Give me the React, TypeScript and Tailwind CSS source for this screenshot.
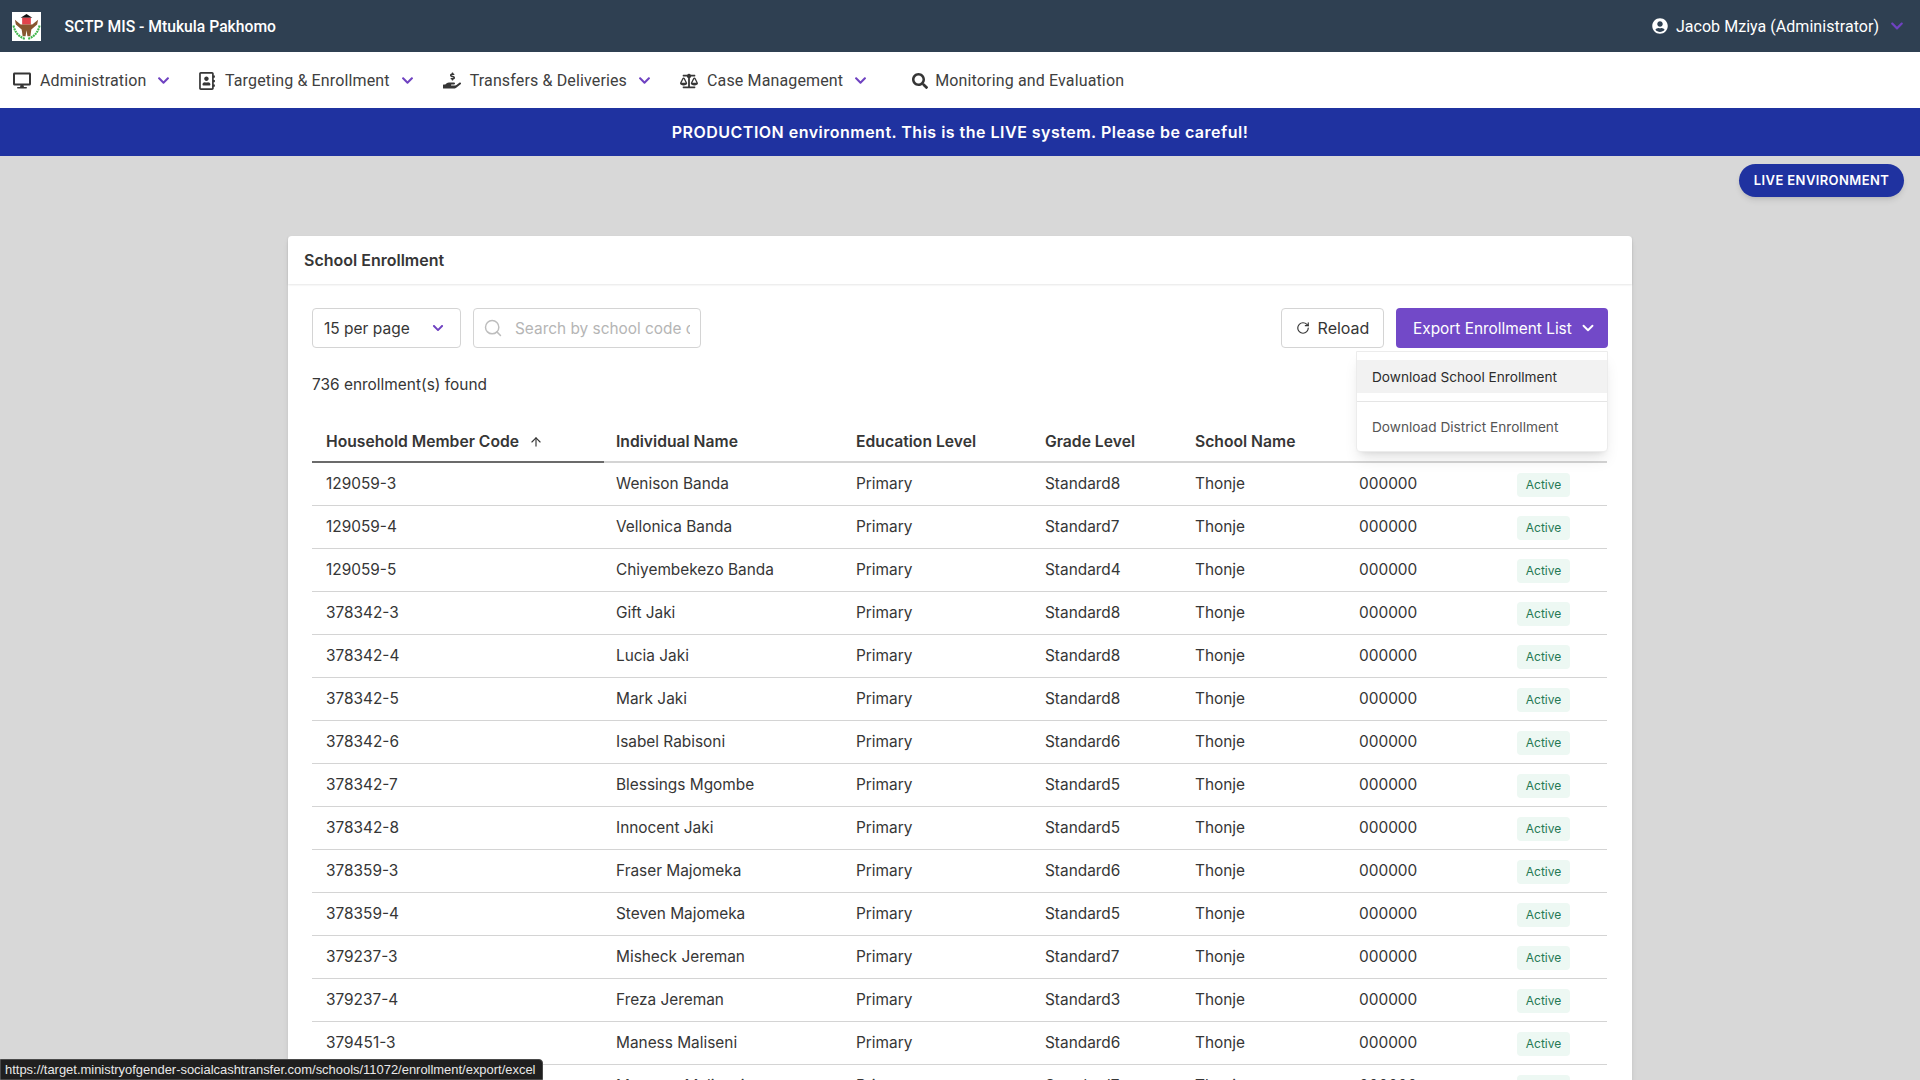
import { FaDesktop, FaRegAddressBook, FaHandHoldingUsd, FaBalanceScale, FaSearch, FaUserCircle, FaChevronDown } from "react-icons/fa"
import { ChevronDown, RotateCw, Search, ArrowUp } from "lucide-react"

const rows = [
  ["129059-3", "Wenison Banda", "Standard8"],
  ["129059-4", "Vellonica Banda", "Standard7"],
  ["129059-5", "Chiyembekezo Banda", "Standard4"],
  ["378342-3", "Gift Jaki", "Standard8"],
  ["378342-4", "Lucia Jaki", "Standard8"],
  ["378342-5", "Mark Jaki", "Standard8"],
  ["378342-6", "Isabel Rabisoni", "Standard6"],
  ["378342-7", "Blessings Mgombe", "Standard5"],
  ["378342-8", "Innocent Jaki", "Standard5"],
  ["378359-3", "Fraser Majomeka", "Standard6"],
  ["378359-4", "Steven Majomeka", "Standard5"],
  ["379237-3", "Misheck Jereman", "Standard7"],
  ["379237-4", "Freza Jereman", "Standard3"],
  ["379451-3", "Maness Maliseni", "Standard6"],
  ["379451-4", "Maureen Maliseni", "Standard7"],
]

const navItems = [
  { label: "Administration", icon: <FaDesktop className="h-[19px] w-[19px]" />, caret: true, gap: "mr-[27.5px]" },
  { label: "Targeting & Enrollment", icon: <FaRegAddressBook className="h-[18px] w-[18px]" />, caret: true, gap: "mr-[29px]" },
  { label: "Transfers & Deliveries", icon: <FaHandHoldingUsd className="h-[19px] w-[19px]" />, caret: true, gap: "mr-[29px]" },
  { label: "Case Management", icon: <FaBalanceScale className="h-[18px] w-[20px]" />, caret: true, gap: "mr-[45px]" },
  { label: "Monitoring and Evaluation", icon: <FaSearch className="h-4 w-4" />, caret: false, gap: "" },
]

function Logo() {
  return (
    <svg viewBox="0 0 30 30" className="h-[29px] w-[29px] bg-white">
      <path d="M9 6 L15 2 L21 6 Z" fill="#111" />
      <rect x="10.5" y="6" width="9" height="7" fill="#e0434b" />
      <path d="M3 8 L9 13 L12 13 L18 13 L21 13 L27 8 L26 13 L20 18 L19 25 L16 25 L15 19 L14 25 L11 25 L10 18 L4 13 Z" fill="#87562f" />
      <path d="M1.5 14 Q4 25 14 28 M28.5 14 Q26 25 16 28" fill="none" stroke="#3fb54a" strokeWidth="2.2" strokeDasharray="2 0.8" />
    </svg>
  )
}

export default function App() {
  return (
    <div className="relative h-screen overflow-hidden bg-[#d8d8d8] font-['Inter',sans-serif] text-[#363636]">
      <header className="flex h-[52px] items-center justify-between bg-[#2f4052] pl-[12px] pr-[16px] text-white">
        <div className="flex items-center gap-[23.5px]">
          <Logo />
          <span className="pt-[1px] font-['Roboto',sans-serif] text-[15.7px] font-medium">SCTP MIS - Mtukula Pakhomo</span>
        </div>
        <div className="flex items-center">
          <FaUserCircle className="h-4 w-4" />
          <span className="ml-[8px] pt-[1px] font-['Roboto',sans-serif] text-[16px] tracking-[0.04px]">Jacob Mziya (Administrator)</span>
          <FaChevronDown className="ml-[11px] h-[14px] w-[14px] text-[#6f42c1]" />
        </div>
      </header>

      <nav className="flex h-[56px] items-center bg-white pl-[13px] pt-[1px] font-['Roboto',sans-serif] text-[16px] tracking-[0.14px] text-[#404040]">
        {navItems.map((item) => (
          <div key={item.label} className={`flex items-center ${item.gap}`}>
            <span className={`flex justify-center text-[#363636] ${item.caret ? "mr-[9px] w-[18px]" : "mr-[7px] w-[16px]"}`}>{item.icon}</span>
            <span>{item.label}</span>
            {item.caret && <FaChevronDown className="ml-[11px] h-[13px] w-[13px] text-[#6f42c1]" />}
          </div>
        ))}
      </nav>

      <div className="flex h-[48px] items-center justify-center bg-[#1f32a0] text-[16px] font-semibold tracking-[0.49px] text-white">
        PRODUCTION environment. This is the LIVE system. Please be careful!
      </div>

      <div className="flex justify-end pr-[16px] pt-[8px]">
        <span className="flex h-[33px] w-[165px] items-center justify-center rounded-full bg-[#1f32a0] text-[13px] font-semibold tracking-[0.4px] text-white shadow-md">
          LIVE ENVIRONMENT
        </span>
      </div>

      <main className="mx-auto mt-[39px] w-[1344px] rounded-t bg-white shadow-md">
        <div className="flex h-[48px] items-center px-[16px] text-[16px] font-semibold shadow-[0_1px_2px_rgba(0,0,0,0.1)]">
          School Enrollment
        </div>

        <div className="px-[24px] pt-[24px]">
          <div className="relative flex items-center justify-between">
            <div className="flex gap-[12px]">
              <div className="flex h-[40px] w-[149px] items-center justify-between rounded border border-[#d4d4d4] pl-[11px] pr-[16px] text-[15.5px]">
                <span className="pt-[1px]">15 per page</span>
                <FaChevronDown className="h-[12px] w-[12px] text-[#6f42c1]" />
              </div>
              <div className="flex h-[40px] w-[228px] items-center overflow-hidden rounded border border-[#d4d4d4] pl-[9px] text-[15.4px] whitespace-nowrap text-[#b5b5b5]">
                <Search className="mr-[12px] h-[20px] w-[20px] shrink-0 text-[#bdbdbd]" strokeWidth={1.75} />
                <span className="w-[175px] overflow-hidden pt-[1px]">Search by school code or name</span>
              </div>
            </div>
            <div className="flex gap-[12px]">
              <div className="flex h-[40px] w-[103px] items-center justify-center rounded border border-[#d4d4d4] text-[16px]">
                <RotateCw className="mr-[8px] h-[14px] w-[14px]" />
                Reload
              </div>
              <div className="flex h-[40px] w-[212px] items-center rounded bg-[#7249c8] pl-[17px] text-[15.4px] text-white">
                <span className="pt-[1px]">Export Enrollment List</span>
                <ChevronDown className="ml-[7px] h-[18px] w-[18px]" strokeWidth={2.5} />
              </div>
            </div>

            <div className="absolute right-0 top-[43px] z-10 w-[252px] rounded-b border border-[#ececec] bg-white py-[8px] text-[13.65px] shadow-lg">
              <div className="flex h-[33px] items-center bg-[#f2f2f2] pl-[15px] pt-[1px] text-[#2c2c2c]">Download School Enrollment</div>
              <div className="my-[8px] h-px bg-[#e5e5e5]" />
              <div className="flex h-[33px] items-center pl-[15px] pt-[1px] text-[#555555]">Download District Enrollment</div>
            </div>
          </div>

          <p className="mt-[25px] text-[15.45px] leading-[24px]">736 enrollment(s) found</p>

          <table className="mt-[22px] w-[1295px] table-fixed border-collapse text-[15.4px]">
            <colgroup>
              <col className="w-[292px]" />
              <col className="w-[240px]" />
              <col className="w-[189px]" />
              <col className="w-[150px]" />
              <col className="w-[164px]" />
              <col className="w-[158px]" />
              <col />
            </colgroup>
            <thead>
              <tr className="h-[43px] text-left text-[15.7px]">
                <th className="border-b-2 border-[#6b6b6b] pl-[14px] pt-[4px] font-semibold">
                  <span className="flex items-center">
                    Household Member Code
                    <ArrowUp className="ml-[10px] h-[14px] w-[14px]" strokeWidth={2} />
                  </span>
                </th>
                <th className="border-b-2 border-[#d4d4d4] pl-[12px] pt-[4px] font-semibold">Individual Name</th>
                <th className="border-b-2 border-[#d4d4d4] pl-[12px] pt-[4px] font-semibold">Education Level</th>
                <th className="border-b-2 border-[#d4d4d4] pl-[12px] pt-[4px] font-semibold">Grade Level</th>
                <th className="border-b-2 border-[#d4d4d4] pl-[12px] pt-[4px] font-semibold">School Name</th>
                <th className="border-b-2 border-[#d4d4d4]" />
                <th className="border-b-2 border-[#d4d4d4]" />
              </tr>
            </thead>
            <tbody>
              {rows.map(([code, name, grade]) => (
                <tr key={code} className="h-[43px] border-b border-[#d4d4d4]">
                  <td className="pl-[14px]">{code}</td>
                  <td className="pl-[12px]">{name}</td>
                  <td className="pl-[12px]">Primary</td>
                  <td className="pl-[12px]">{grade}</td>
                  <td className="pl-[12px]">Thonje</td>
                  <td className="pl-[12px]">000000</td>
                  <td className="pl-[12px]">
                    <span className="inline-flex h-[24px] w-[53px] translate-y-[1px] items-center justify-center rounded bg-[#edf8f3] text-[12px] text-[#257953]">
                      Active
                    </span>
                  </td>
                </tr>
              ))}
            </tbody>
          </table>
        </div>
      </main>

      <div className="fixed bottom-0 left-0 flex h-[21px] w-[543px] items-center rounded-tr border border-[#4a4a4a] bg-[#1f1f1f] pl-[4px] font-['Liberation_Sans',sans-serif] text-[12.95px] whitespace-nowrap text-[#e8e8e8]">
        https://target.ministryofgender-socialcashtransfer.com/schools/11072/enrollment/export/excel
      </div>
    </div>
  )
}
